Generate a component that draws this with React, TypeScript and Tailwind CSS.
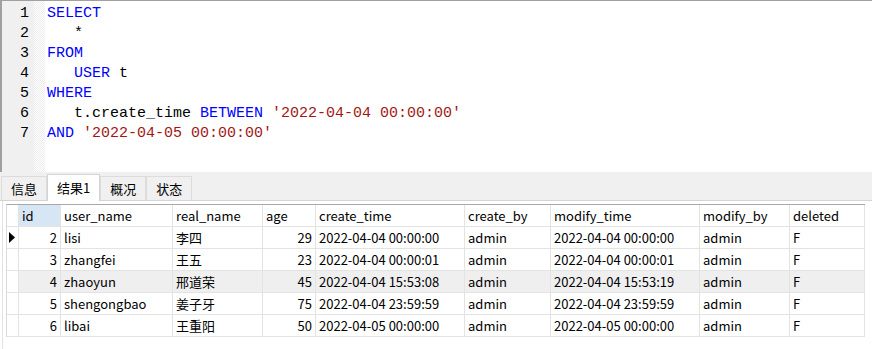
import React from "react"

const K = ({ children }: { children: React.ReactNode }) => <span className="text-[#0000ff]">{children}</span>
const S = ({ children }: { children: React.ReactNode }) => <span className="text-[#a31515]">{children}</span>

const codeLines: React.ReactNode[] = [
  <K>SELECT</K>,
  <>{"   *"}</>,
  <K>FROM</K>,
  <>{"   "}<K>USER</K>{" t"}</>,
  <K>WHERE</K>,
  <>{"   t.create_time "}<K>BETWEEN</K>{" "}<S>'2022-04-04 00:00:00'</S></>,
  <><K>AND</K>{" "}<S>'2022-04-05 00:00:00'</S></>,
]

const columns = [
  { key: "id", label: "id", w: "w-[42px]", right: true },
  { key: "user_name", label: "user_name", w: "w-[112px]" },
  { key: "real_name", label: "real_name", w: "w-[90px]" },
  { key: "age", label: "age", w: "w-[53px]", right: true },
  { key: "create_time", label: "create_time", w: "w-[149px]" },
  { key: "create_by", label: "create_by", w: "w-[86px]" },
  { key: "modify_time", label: "modify_time", w: "w-[149px]" },
  { key: "modify_by", label: "modify_by", w: "w-[90px]" },
  { key: "deleted", label: "deleted", w: "w-[75px]" },
]

const rows: Record<string, string>[] = [
  { id: "2", user_name: "lisi", real_name: "李四", age: "29", create_time: "2022-04-04 00:00:00", create_by: "admin", modify_time: "2022-04-04 00:00:00", modify_by: "admin", deleted: "F" },
  { id: "3", user_name: "zhangfei", real_name: "王五", age: "23", create_time: "2022-04-04 00:00:01", create_by: "admin", modify_time: "2022-04-04 00:00:01", modify_by: "admin", deleted: "F" },
  { id: "4", user_name: "zhaoyun", real_name: "邢道荣", age: "45", create_time: "2022-04-04 15:53:08", create_by: "admin", modify_time: "2022-04-04 15:53:19", modify_by: "admin", deleted: "F" },
  { id: "5", user_name: "shengongbao", real_name: "姜子牙", age: "75", create_time: "2022-04-04 23:59:59", create_by: "admin", modify_time: "2022-04-04 23:59:59", modify_by: "admin", deleted: "F" },
  { id: "6", user_name: "libai", real_name: "王重阳", age: "50", create_time: "2022-04-05 00:00:00", create_by: "admin", modify_time: "2022-04-05 00:00:00", modify_by: "admin", deleted: "F" },
]

const tabs = [
  { label: "信息", active: false },
  { label: "结果1", active: true },
  { label: "概况", active: false },
  { label: "状态", active: false },
]

export default function App() {
  return (
    <div className="w-[872px] h-[349px] bg-white overflow-hidden flex flex-col">
      {/* editor */}
      <div className="h-[172px] flex border-t border-l-2 border-[#a0a0a0] font-['Liberation_Mono',monospace] text-[15px] leading-[20px]">
        <div className="w-[32px] bg-[#f0f0f0] pt-[3px] pr-[5px] text-right text-black">
          {codeLines.map((_, i) => (
            <div key={i}>{i + 1}</div>
          ))}
        </div>
        <div className="w-[11px] bg-[repeating-conic-gradient(#ececec_0_25%,#ffffff_0_50%)] bg-[length:2px_2px]" />
        <div className="flex-1 pt-[3px] pl-[2px] text-black whitespace-pre">
          {codeLines.map((line, i) => (
            <div key={i}>{line}</div>
          ))}
        </div>
      </div>

      {/* tab strip */}
      <div className="h-[29px] bg-[#f0f0f0] border-b border-[#d4d4d4] flex items-end pl-[1px] font-['Noto_Sans_CJK_SC',sans-serif] text-[13px] text-black">
        {tabs.map((t) =>
          t.active ? (
            <div key={t.label} className="h-[27px] -mb-px px-[9px] bg-white border border-b-0 border-[#d4d4d4] flex items-center">
              {t.label}
            </div>
          ) : (
            <div key={t.label} className="h-[24px] px-[9px] border border-b-0 border-[#dcdcdc] flex items-center">
              {t.label}
            </div>
          )
        )}
      </div>

      {/* result grid */}
      <div className="flex-1 ml-[2px] border-l border-[#e3e3e3] pl-[3px] pt-[3px] font-['Noto_Sans_CJK_SC',sans-serif] text-[13px] text-black">
        <div className="w-[859px] border-t border-l border-[#a8a8a8] border-l-[#dcdcdc]">
          <div className="flex h-[22px]">
            <div className="w-[12px] border-r border-b border-[#e3e3e3]" />
            {columns.map((c) => (
              <div
                key={c.key}
                className={`${c.w} border-r border-b border-[#e3e3e3] pl-[3px] flex items-center ${c.key === "id" ? "bg-[#d7e6f5]" : ""}`}
              >
                {c.label}
              </div>
            ))}
          </div>
          {rows.map((r, ri) => (
            <div key={r.id} className="flex h-[22px]">
              <div className="w-[12px] border-r border-b border-[#e3e3e3] flex items-center pl-[2px]">
                {ri === 0 && (
                  <svg width="6" height="11" viewBox="0 0 6 11">
                    <path d="M0 0 L6 5.5 L0 11 Z" fill="#000" />
                  </svg>
                )}
              </div>
              {columns.map((c) => (
                <div
                  key={c.key}
                  className={`${c.w} border-r border-b border-[#e3e3e3] flex items-center ${c.right ? "justify-end pr-[3px]" : "pl-[3px]"} ${ri === 2 ? "bg-[#efefef]" : ""}`}
                >
                  {r[c.key]}
                </div>
              ))}
            </div>
          ))}
        </div>
      </div>
    </div>
  )
}
